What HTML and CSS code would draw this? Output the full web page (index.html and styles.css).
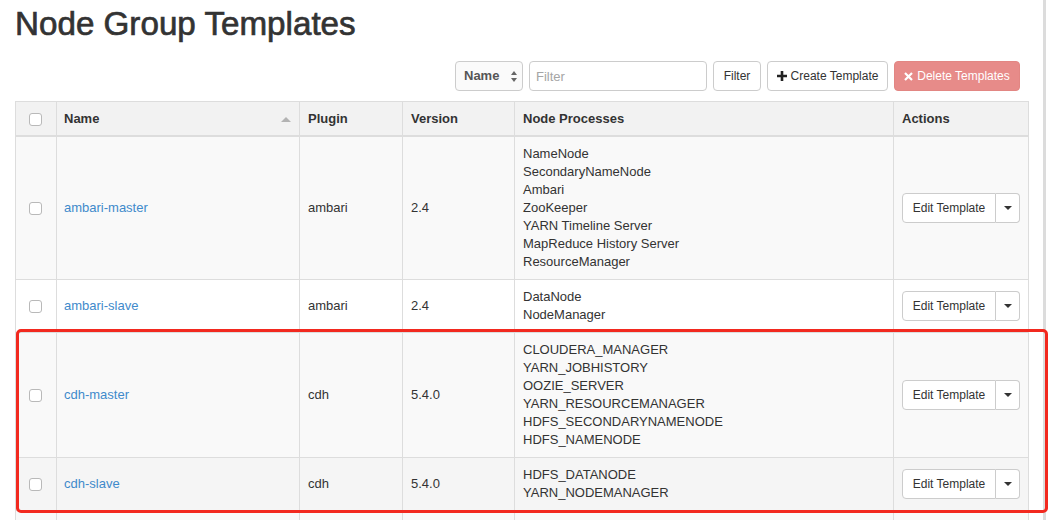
FILE: index.html
```html
<!DOCTYPE html>
<html lang="en">
<head>
<meta charset="utf-8">
<title>Node Group Templates</title>
<link rel="stylesheet" href="styles.css">
</head>
<body>
<div class="page">
  <main class="content">
    <h1 class="title">Node Group Templates</h1>
    <div class="toolbar">
      <div class="select">
        <span class="select-label">Name</span>
        <svg class="select-arrows" width="6" height="11" viewBox="0 0 6 11"><path d="M3 0L6 4H0z M3 11L0 7h6z" fill="#666"/></svg>
      </div>
      <input class="filter-input" type="text" placeholder="Filter">
      <button class="btn btn-filter">Filter</button>
      <button class="btn btn-create"><svg class="icon" width="10" height="10" viewBox="0 0 10 10"><path d="M5 0v10M0 5h10" stroke="#222" stroke-width="2.6"/></svg>Create Template</button>
      <button class="btn btn-danger"><svg class="icon" width="9" height="9" viewBox="0 0 9 9"><path d="M1 1l7 7M8 1L1 8" stroke="#fff" stroke-width="2.2"/></svg>Delete Templates</button>
    </div>
    <table class="grid">
      <colgroup>
        <col class="c-check"><col class="c-name"><col class="c-plugin"><col class="c-version"><col class="c-proc"><col class="c-actions">
      </colgroup>
      <thead>
        <tr>
          <th class="cell-check"><input class="check" type="checkbox"></th>
          <th class="cell-name">Name<span class="sort-arrow"></span></th>
          <th>Plugin</th>
          <th>Version</th>
          <th>Node Processes</th>
          <th>Actions</th>
        </tr>
      </thead>
      <tbody>
        <tr class="row-alt">
          <td class="cell-check"><input class="check" type="checkbox"></td>
          <td class="cell-name"><a href="#">ambari-master</a></td>
          <td>ambari</td>
          <td>2.4</td>
          <td>NameNode<br>SecondaryNameNode<br>Ambari<br>ZooKeeper<br>YARN Timeline Server<br>MapReduce History Server<br>ResourceManager</td>
          <td><div class="btn-group"><button class="btn">Edit Template</button><button class="btn btn-caret"><span class="caret"></span></button></div></td>
        </tr>
        <tr>
          <td class="cell-check"><input class="check" type="checkbox"></td>
          <td class="cell-name"><a href="#">ambari-slave</a></td>
          <td>ambari</td>
          <td>2.4</td>
          <td>DataNode<br>NodeManager</td>
          <td><div class="btn-group"><button class="btn">Edit Template</button><button class="btn btn-caret"><span class="caret"></span></button></div></td>
        </tr>
        <tr class="row-alt">
          <td class="cell-check"><input class="check" type="checkbox"></td>
          <td class="cell-name"><a href="#">cdh-master</a></td>
          <td>cdh</td>
          <td>5.4.0</td>
          <td>CLOUDERA_MANAGER<br>YARN_JOBHISTORY<br>OOZIE_SERVER<br>YARN_RESOURCEMANAGER<br>HDFS_SECONDARYNAMENODE<br>HDFS_NAMENODE</td>
          <td><div class="btn-group"><button class="btn">Edit Template</button><button class="btn btn-caret"><span class="caret"></span></button></div></td>
        </tr>
        <tr class="row-hover">
          <td class="cell-check"><input class="check" type="checkbox"></td>
          <td class="cell-name"><a href="#">cdh-slave</a></td>
          <td>cdh</td>
          <td>5.4.0</td>
          <td>HDFS_DATANODE<br>YARN_NODEMANAGER</td>
          <td><div class="btn-group"><button class="btn">Edit Template</button><button class="btn btn-caret"><span class="caret"></span></button></div></td>
        </tr>
        <tr class="row-alt row-filler">
          <td></td><td></td><td></td><td></td><td></td><td></td>
        </tr>
      </tbody>
    </table>
  </main>
  <div class="edge"></div>
  <div class="highlight"></div>
</div>
</body>
</html>
```
FILE: styles.css
```css
html, body {
  margin: 0;
  padding: 0;
  background: #fff;
}
body {
  font-family: "Liberation Sans", Arial, sans-serif;
  font-size: 13px;
  line-height: 18px;
  color: #333;
}
.page {
  position: relative;
  display: flex;
  height: 520px;
  overflow: hidden;
}
.content {
  width: 1043px;
  flex: none;
  box-sizing: border-box;
  padding: 0 15px;
}
.edge {
  width: 3px;
  flex: none;
  background: #dcdcdc;
}
.title {
  margin: 6px 0 0;
  font-size: 33.2px;
  line-height: 36px;
  font-weight: normal;
  -webkit-text-stroke: 0.7px #333;
  color: #333;
}
.toolbar {
  display: flex;
  justify-content: flex-end;
  gap: 6px;
  margin-top: 19px;
  padding-right: 8px;
  height: 30px;
}
.select {
  box-sizing: border-box;
  width: 68px;
  height: 30px;
  flex: none;
  border: 1px solid #ccc;
  border-radius: 4px;
  display: flex;
  align-items: center;
  justify-content: space-between;
  padding: 0 5px 0 8px;
  background: #fafafa;
}
.select-label {
  font-weight: bold;
  font-size: 13px;
  color: #555;
}
.filter-input {
  box-sizing: border-box;
  width: 178px;
  height: 30px;
  flex: none;
  border: 1px solid #ccc;
  border-radius: 4px;
  padding: 0 6px;
  font-family: inherit;
  font-size: 13px;
  color: #333;
  background: #fff;
}
.filter-input::placeholder {
  color: #a5a5a5;
}
.btn {
  box-sizing: border-box;
  height: 30px;
  padding: 0 10px;
  border: 1px solid #ccc;
  border-radius: 4px;
  background: #fff;
  color: #333;
  font-family: inherit;
  font-size: 12px;
  line-height: 16px;
  display: inline-flex;
  align-items: center;
  justify-content: center;
  white-space: nowrap;
  flex: none;
}
.btn .icon {
  margin-right: 4px;
}
.btn-filter { width: 48px; padding: 0; }
.btn-create { width: 121px; padding: 0; }
.btn-danger {
  width: 126px;
  padding: 0;
  background: #e78b89;
  border-color: #e28683;
  color: #fff;
}
.grid {
  margin-top: 10px;
  width: 1013px;
  table-layout: fixed;
  border-collapse: collapse;
  border: 1px solid #ddd;
}
.c-check { width: 41px; }
.c-name { width: 243px; }
.c-plugin { width: 103px; }
.c-version { width: 112px; }
.c-proc { width: 379px; }
.c-actions { width: 135px; }
.grid th, .grid td {
  border: 1px solid #ddd;
  padding: 7.5px 8px 8.5px 8px;
  text-align: left;
  vertical-align: middle;
}
.grid th {
  background: #f2f2f2;
  font-weight: bold;
  padding-top: 7.5px;
  padding-bottom: 7.5px;
  border-bottom: 2px solid #ddd;
}
.grid .cell-name {
  padding-left: 7px;
}
.grid .cell-check {
  text-align: center;
  padding-left: 0;
  padding-right: 1px;
}
.check {
  appearance: none;
  -webkit-appearance: none;
  width: 13px;
  height: 13px;
  margin: 0;
  border: 1px solid #b9b9b9;
  border-radius: 3px;
  background: #fff;
  vertical-align: middle;
}
.sort-arrow {
  float: right;
  margin-top: 7px;
  width: 0;
  height: 0;
  border-left: 5px solid transparent;
  border-right: 5px solid transparent;
  border-bottom: 5px solid #b3b3b3;
}
.grid tbody tr { background: #fff; }
.grid tbody tr.row-alt { background: #f9f9f9; }
.grid tbody tr.row-hover { background: #f5f5f5; }
.grid .row-filler td { height: 30px; }
.grid a {
  color: #3f8acb;
  text-decoration: none;
}
.btn-group {
  display: flex;
}
.btn-group .btn:first-child {
  border-top-right-radius: 0;
  border-bottom-right-radius: 0;
  width: 94px;
  padding: 0;
}
.btn-group .btn-caret {
  border-left: 0;
  border-top-left-radius: 0;
  border-bottom-left-radius: 0;
  width: 24px;
  padding: 0;
}
.caret {
  width: 0;
  height: 0;
  border-left: 4px solid transparent;
  border-right: 4px solid transparent;
  border-top: 4px solid #333;
}
.highlight {
  position: absolute;
  left: 16px;
  top: 329px;
  width: 1032px;
  height: 184px;
  box-sizing: border-box;
  border: 3px solid #f2291f;
  border-radius: 5px;
  pointer-events: none;
}
```
